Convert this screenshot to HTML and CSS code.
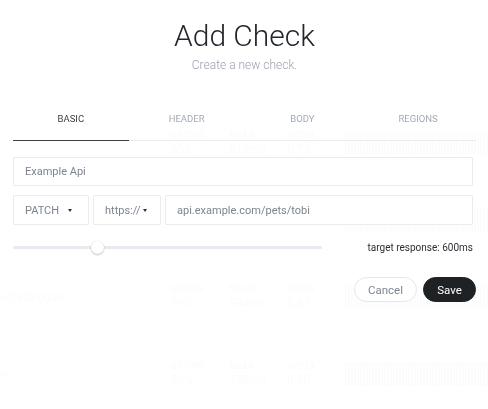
FILE: index.html
```html
<!DOCTYPE html>
<html lang="en">
<head>
<meta charset="utf-8">
<title>Add Check</title>
<link rel="stylesheet" href="styles.css">
</head>
<body>
<main class="dashboard">
  <div class="row">
    <div class="name"></div>
    <div class="stat"><span class="lbl">UPTIME</span><span class="val">95%</span></div>
    <div class="stat"><span class="lbl">MEAN</span><span class="val">810ms</span></div>
    <div class="stat"><span class="lbl">APDEX</span><span class="val">0.79</span></div>
    <div class="chart"></div>
  </div>
  <div class="row">
    <div class="name"></div>
    <div class="stat"></div>
    <div class="stat"></div>
    <div class="stat"></div>
    <div class="chart"></div>
  </div>
  <div class="row">
    <div class="name">v/catalogue...</div>
    <div class="stat"><span class="lbl">UPTIME</span><span class="val">99%</span></div>
    <div class="stat"><span class="lbl">MEAN</span><span class="val">994ms</span></div>
    <div class="stat"><span class="lbl">APDEX</span><span class="val">0.81</span></div>
    <div class="chart"></div>
  </div>
  <div class="row">
    <div class="name">n</div>
    <div class="stat"><span class="lbl">UPTIME</span><span class="val">93%</span></div>
    <div class="stat"><span class="lbl">MEAN</span><span class="val">758ms</span></div>
    <div class="stat"><span class="lbl">APDEX</span><span class="val">0.80</span></div>
    <div class="chart"></div>
  </div>
</main>

<div class="overlay">
  <section class="modal">
    <h1 class="title">Add Check</h1>
    <p class="subtitle">Create a new check.</p>

    <nav class="tabs">
      <span class="tab active">BASIC</span>
      <span class="tab">HEADER</span>
      <span class="tab">BODY</span>
      <span class="tab">REGIONS</span>
    </nav>

    <div class="form">
      <div class="field">Example Api</div>
      <div class="field-row">
        <div class="field select method">PATCH <span class="caret"></span></div>
        <div class="field select scheme">https:// <span class="caret"></span></div>
        <div class="field url">api.example.com/pets/tobi</div>
      </div>
      <div class="slider-row">
        <div class="slider"><span class="thumb"></span></div>
        <span class="target">target response: 600ms</span>
      </div>
      <div class="actions">
        <button class="btn cancel">Cancel</button>
        <button class="btn save">Save</button>
      </div>
    </div>
  </section>
</div>
</body>
</html>
```

FILE: styles.css
```css
* { box-sizing: border-box; }

html, body {
  margin: 0;
  padding: 0;
  background: #ffffff;
  font-family: Roboto, "Noto Sans", "Liberation Sans", sans-serif;
  overflow: hidden;
}

/* background dashboard (mostly hidden under modal overlay) */
.dashboard {
  padding-top: 104px;
}

.row {
  display: grid;
  grid-template-columns: 171px 58px 58px 58px 1fr;
  align-items: center;
  height: 77px;
}

.name {
  font-size: 12px;
  color: #555;
  white-space: nowrap;
  overflow: hidden;
}

.stat {
  display: flex;
  flex-direction: column;
  gap: 2px;
}

.lbl {
  font-size: 9px;
  font-weight: 700;
  color: #666;
}

.val {
  font-size: 12px;
  color: #555;
}

.chart {
  height: 24px;
  background: repeating-linear-gradient(90deg, #777 0 2px, transparent 2px 3px);
}

.overlay {
  position: fixed;
  inset: 0;
  background: rgba(255, 255, 255, 0.975);
}

.modal {
  padding: 18px 12px 0 13px;
}

.title {
  margin: 0;
  text-align: center;
  font-size: 30px;
  line-height: 36px;
  font-weight: 300;
  color: #23262b;
}

.subtitle {
  margin: 4px 0 0;
  text-align: center;
  font-size: 12px;
  line-height: 14px;
  font-weight: 300;
  color: #9aa1b1;
}

.tabs {
  margin-top: 41px;
  display: grid;
  grid-template-columns: repeat(4, 1fr);
  border-bottom: 1px solid #e9ecf2;
}

.tab {
  text-align: center;
  font-size: 9.5px;
  line-height: 12px;
  padding-bottom: 15px;
  color: #a3a9b6;
  margin-bottom: -1px;
  border-bottom: 1px solid transparent;
}

.tab.active {
  color: #3b3e44;
  border-bottom-color: #3d4046;
}

.form {
  margin-top: 16px;
  padding-right: 3px;
  display: flex;
  flex-direction: column;
}

.field {
  height: 29px;
  border: 1px solid #e8ebf1;
  border-radius: 1px;
  padding: 0 11px;
  display: flex;
  align-items: center;
  font-size: 11px;
  color: #7c8493;
  background: #fff;
}

.field-row {
  margin-top: 9px;
  display: flex;
  gap: 4px;
}

.field-row .field {
  height: 30px;
}

.select {
  justify-content: space-between;
}

.method { width: 76px; }
.scheme { width: 68px; padding-right: 13px; }
.url { flex: 1; }

.caret {
  width: 0;
  height: 0;
  border-left: 2.5px solid transparent;
  border-right: 2.5px solid transparent;
  border-top: 3px solid #2f3237;
}

.method .caret { margin-right: 5px; }

.slider-row {
  margin-top: 15px;
  display: flex;
  align-items: center;
  justify-content: space-between;
  height: 14px;
}

.slider {
  position: relative;
  width: 309px;
  height: 3px;
  border-radius: 2px;
  background: #e7eaf1;
}

.thumb {
  position: absolute;
  left: 78px;
  top: -5px;
  width: 13px;
  height: 13px;
  border-radius: 50%;
  background: #fff;
  box-shadow: 0 1px 2px rgba(0, 0, 0, 0.22), 0 0 0 0.5px rgba(0, 0, 0, 0.06);
}

.target {
  font-size: 10px;
  color: #2c2f34;
}

.actions {
  margin-top: 23px;
  margin-right: -3px;
  display: flex;
  justify-content: flex-end;
  gap: 6px;
}

.btn {
  height: 25px;
  border-radius: 13px;
  font-family: Roboto, "Noto Sans", "Liberation Sans", sans-serif;
  font-size: 11.5px;
  padding: 0;
  cursor: pointer;
}

.cancel {
  width: 63px;
  background: #fff;
  border: 1px solid #e3e7ee;
  color: #7e8596;
}

.save {
  width: 53px;
  background: #1f2225;
  border: 1px solid #1f2225;
  color: #fff;
}
```
